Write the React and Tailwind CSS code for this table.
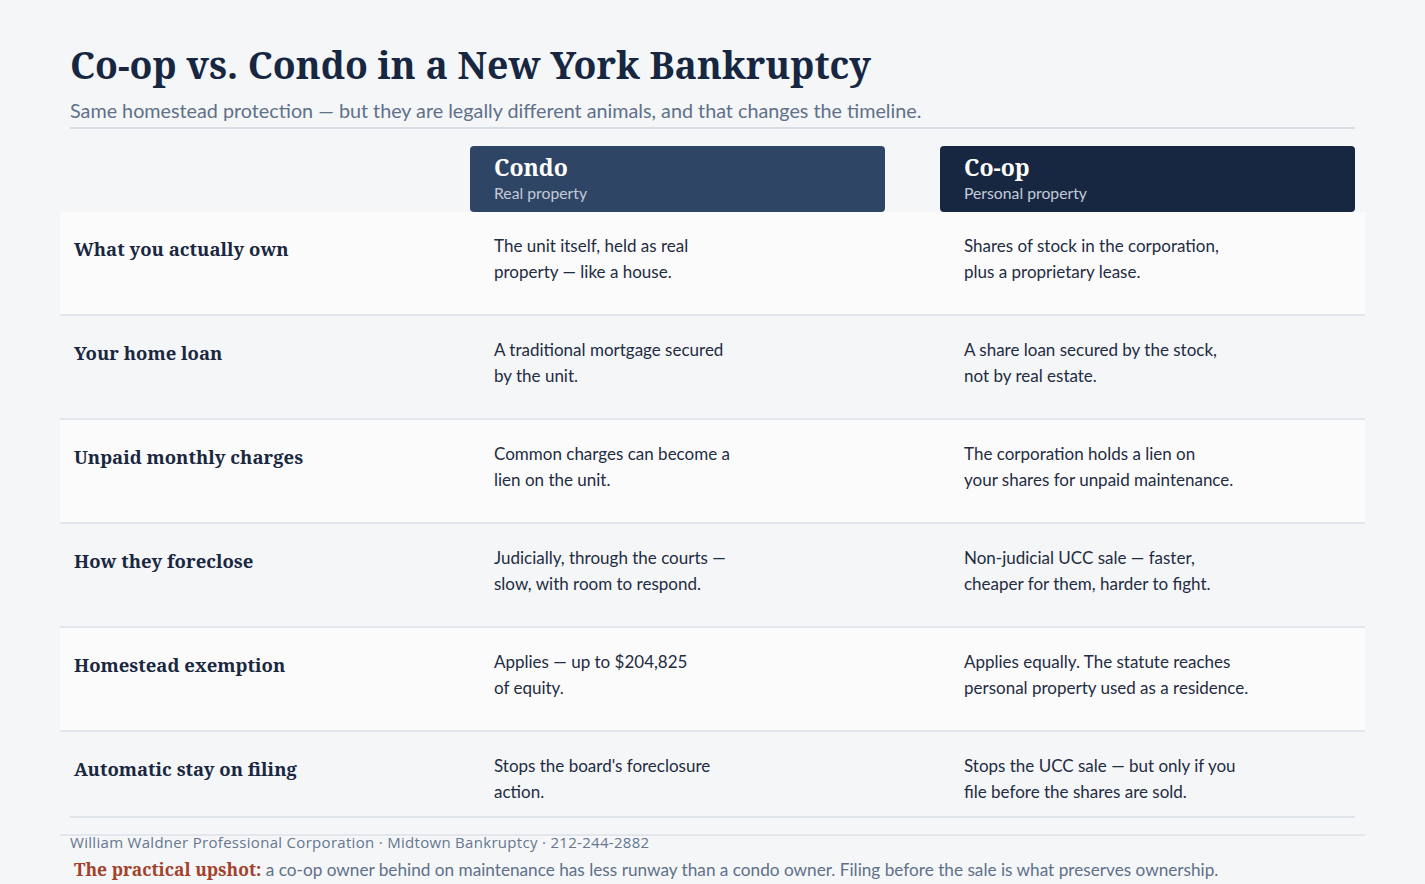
import React from "react";

const serif = { fontFamily: '"Noto Serif", "DejaVu Serif", serif' };

const rows = [
  {
    label: "What you actually own",
    condo: ["The unit itself, held as real", "property — like a house."],
    coop: ["Shares of stock in the corporation,", "plus a proprietary lease."],
  },
  {
    label: "Your home loan",
    condo: ["A traditional mortgage secured", "by the unit."],
    coop: ["A share loan secured by the stock,", "not by real estate."],
  },
  {
    label: "Unpaid monthly charges",
    condo: ["Common charges can become a", "lien on the unit."],
    coop: ["The corporation holds a lien on", "your shares for unpaid maintenance."],
  },
  {
    label: "How they foreclose",
    condo: ["Judicially, through the courts —", "slow, with room to respond."],
    coop: ["Non-judicial UCC sale — faster,", "cheaper for them, harder to fight."],
  },
  {
    label: "Homestead exemption",
    condo: ["Applies — up to $204,825", "of equity."],
    coop: ["Applies equally. The statute reaches", "personal property used as a residence."],
  },
  {
    label: "Automatic stay on filing",
    condo: ["Stops the board's foreclosure", "action."],
    coop: ["Stops the UCC sale — but only if you", "file before the shares are sold."],
  },
];

function Lines({ lines }) {
  return (
    <div className="text-[17px] leading-[26px] text-[#1f2c42]">
      {lines.map((l, i) => (
        <React.Fragment key={i}>
          {l}
          {i < lines.length - 1 && <br />}
        </React.Fragment>
      ))}
    </div>
  );
}

export default function App() {
  return (
    <div
      className="min-h-screen bg-[#f4f6f8] px-[70px] pt-[41px]"
      style={{ fontFamily: 'Lato, "Open Sans", sans-serif' }}
    >
      <h1
        className="text-[37.4px] leading-[48px] font-bold text-[#172741]"
        style={serif}
      >
        Co-op vs. Condo in a New York Bankruptcy
      </h1>
      <p className="mt-[9px] pb-[3px] text-[19.75px] leading-[26px] text-[#5f7089] border-b-2 border-[#d6dde5]">
        Same homestead protection — but they are legally different animals, and that changes the timeline.
      </p>

      <div className="mt-[17px] grid grid-cols-[345px_415px_415px] gap-x-[55px]">
        <div />
        <div className="h-[66px] rounded-[4px] bg-[#2f4566] px-[24px] pt-[6px]">
          <div className="text-[23px] leading-[30px] font-bold text-white" style={serif}>
            Condo
          </div>
          <div className="text-[15.75px] leading-[22px] text-[#c3cbd7]">Real property</div>
        </div>
        <div className="h-[66px] rounded-[4px] bg-[#172741] px-[24px] pt-[6px]">
          <div className="text-[23px] leading-[30px] font-bold text-white" style={serif}>
            Co-op
          </div>
          <div className="text-[15.75px] leading-[22px] text-[#c3cbd7]">Personal property</div>
        </div>
      </div>

      <div className="-mx-[10px]">
        {rows.map((r, i) => (
          <div
            key={i}
            className={`grid grid-cols-[420px_470px_1fr] h-[104px] pl-[14px] pt-[21px] border-b-2 border-[#e3e7ed] ${
              i % 2 === 0 ? "bg-[#fbfbfc]" : ""
            }`}
          >
            <div
              className="pt-[3px] text-[18.5px] leading-[26px] font-bold text-[#1a2740]"
              style={serif}
            >
              {r.label}
            </div>
            <Lines lines={r.condo} />
            <Lines lines={r.coop} />
          </div>
        ))}
      </div>

      <div className="-mt-[20px] border-t-2 border-[#e0e5eb] pt-[15px]">
        <div
          className="text-[15px] leading-[18px] tracking-[0.02em] text-[#66778f]"
          style={{ fontFamily: '"Open Sans", sans-serif' }}
        >
          William Waldner Professional Corporation · Midtown Bankruptcy · 212-244-2882
        </div>
        <div className="mt-[5px] pl-[4px] text-[17.2px] leading-[26px] text-[#5f7089]">
          <span className="text-[17.5px] font-bold text-[#a3412b]" style={serif}>
            The practical upshot:
          </span>{" "}
          a co-op owner behind on maintenance has less runway than a condo owner. Filing before the sale is what preserves ownership.
        </div>
      </div>
    </div>
  );
}
